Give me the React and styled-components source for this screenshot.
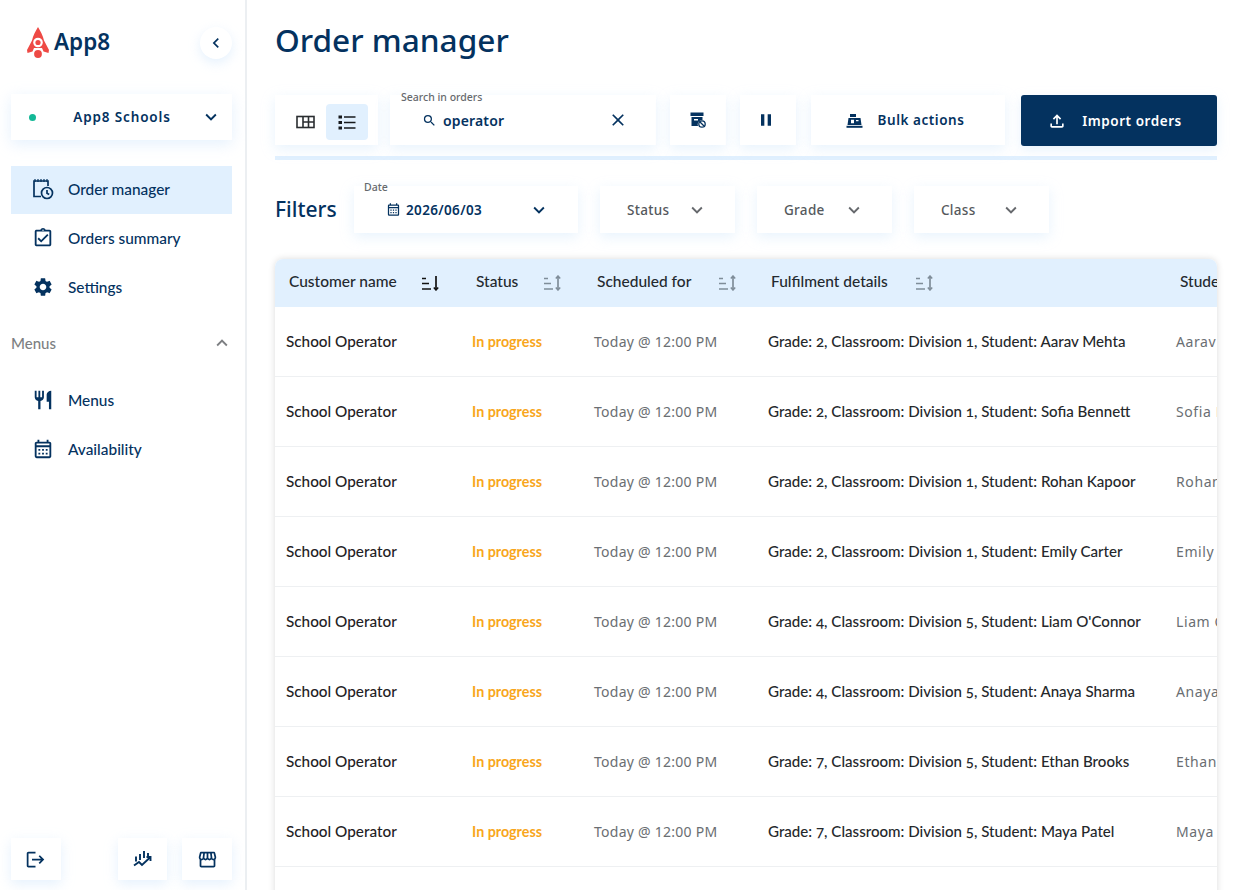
import React from "react";
import styled, { createGlobalStyle } from "styled-components";
import {
  MdChevronLeft,
  MdExpandMore,
  MdExpandLess,
  MdOutlineAssignmentTurnedIn,
  MdSettings,
  MdRestaurant,
  MdOutlineCalendarMonth,
  MdOutlineStorefront,
  MdSearch,
  MdClose,
  MdPause,
  MdOutlineFileUpload,
  MdLogout,
} from "react-icons/md";

const navy = "#04325f";
const pale = "#e1f0fe";
const heading = `"Noto Sans", "Open Sans", sans-serif`;
const body = `"Lato", "Open Sans", sans-serif`;

const Global = createGlobalStyle`
  html, body {
    margin: 0;
    height: 890px;
    overflow: hidden;
    background: #fff;
    font-family: ${body};
  }
  * { box-sizing: border-box; }
`;

const Page = styled.div`
  display: flex;
  width: 1240px;
  height: 890px;
  overflow: hidden;
`;

const Sidebar = styled.aside`
  width: 247px;
  flex: none;
  height: 890px;
  border-right: 2px solid #eceff2;
  padding: 0 13px 10px 11px;
  display: flex;
  flex-direction: column;
  color: ${navy};
`;

const LogoRow = styled.div`
  height: 94px;
  display: flex;
  align-items: center;
  justify-content: space-between;
  padding: 0 0 8px 15px;
`;

const Logo = styled.div`
  display: flex;
  align-items: center;
  gap: 4px;
  font: 600 22.5px ${heading};
`;

const LogoText = styled.span`
  margin-bottom: 4px;
`;

const RoundBtn = styled.button`
  width: 32px;
  height: 32px;
  border: 0;
  border-radius: 50%;
  background: #fff;
  color: ${navy};
  box-shadow: 0 4px 12px rgba(190, 220, 250, 0.4);
  display: grid;
  place-items: center;
  padding: 0;
  font-size: 20px;
`;

const Selector = styled.div`
  height: 46px;
  display: flex;
  align-items: center;
  padding: 0 10px 0 18px;
  box-shadow: 0 4px 14px rgba(190, 220, 250, 0.4);
  font: 600 13.5px ${heading};
  letter-spacing: 0.85px;
  svg { font-size: 22px; }
`;

const Dot = styled.span`
  width: 7px;
  height: 7px;
  border-radius: 50%;
  background: #13b896;
`;

const SelectorText = styled.span`
  flex: 1;
  text-align: center;
  padding-left: 8px;
`;

const NavList = styled.nav`
  display: flex;
  flex-direction: column;
  gap: 1px;
  margin-top: ${(p) => p.$top}px;
`;

const NavItem = styled.a`
  height: 48px;
  display: flex;
  align-items: center;
  gap: 14px;
  padding: 0 0 2px 21px;
  background: ${(p) => (p.$active ? pale : "transparent")};
  font: 500 15.4px ${body};
  color: ${navy};
  svg { font-size: 22px; flex: none; }
`;

const Section = styled.div`
  margin-top: 7px;
  height: 48px;
  display: flex;
  align-items: center;
  justify-content: space-between;
  font: 500 15px ${body};
  color: #7d7f82;
  svg { font-size: 22px; margin-right: -1px; }
`;

const SideFooter = styled.div`
  margin-top: auto;
  display: flex;
  gap: 15px;
`;

const FootBtn = styled.button`
  width: 50px;
  height: 42px;
  border: 0;
  background: #fff;
  color: ${navy};
  box-shadow: 0 4px 12px rgba(190, 220, 250, 0.4);
  display: grid;
  place-items: center;
  padding: 0;
  font-size: 21px;
  margin-right: ${(p) => (p.$push ? 42 : 0)}px;
`;

const Main = styled.main`
  flex: 1;
  min-width: 0;
  padding: 0 23px 0 28px;
`;

const Title = styled.h1`
  margin: 0;
  height: 95px;
  padding-top: 17px;
  font: 500 31.6px/46px ${heading};
  color: ${navy};
`;

const Toolbar = styled.div`
  display: flex;
  gap: 14px;
  height: 51px;
  align-items: flex-start;
`;

const Card = styled.div`
  background: #fff;
  height: 50px;
  box-shadow: 0 4px 12px rgba(190, 220, 250, 0.35);
  display: flex;
  align-items: center;
  flex: none;
  position: relative;
  color: ${navy};
`;

const ViewSwitch = styled(Card)`
  width: 103px;
  padding: 4px 10px 0 9px;
  justify-content: space-between;
`;

const ViewBtn = styled.span`
  width: 42px;
  height: 36px;
  border-radius: 4px;
  display: grid;
  place-items: center;
  background: ${(p) => (p.$on ? pale : "transparent")};
`;

const SearchBox = styled(Card)`
  width: 266px;
  padding: 0 28px 0 32px;
  margin-left: -2px;
  font: 600 14px ${heading};
  letter-spacing: 0.15px;
`;

const FieldLabel = styled.span`
  position: absolute;
  left: ${(p) => p.$left}px;
  top: ${(p) => p.$top}px;
  font: 500 10.5px ${heading};
  letter-spacing: 0;
  color: #666a6e;
  white-space: nowrap;
`;

const SearchText = styled.span`
  flex: 1;
  padding-left: 6px;
`;

const IconBtn = styled(Card)`
  width: 56px;
  justify-content: center;
  font-size: 20px;
  padding-right: ${(p) => p.$shift || 0}px;
`;

const BulkBtn = styled(Card)`
  width: 194px;
  margin-left: 1px;
  justify-content: center;
  gap: 15px;
  padding-right: 6px;
  font: 600 13.5px ${heading};
  letter-spacing: 0.55px;
  svg { flex: none; }
`;

const ImportBtn = styled(BulkBtn)`
  width: 196px;
  height: 51px;
  margin-left: 2px;
  padding-right: 9px;
  border-radius: 3px;
  background: ${navy};
  color: #fff;
`;

const Divider = styled.div`
  height: 4px;
  margin-top: 10px;
  background: ${pale};
`;

const Filters = styled.div`
  margin-top: 26px;
  height: 47px;
  display: flex;
  gap: 22px;
  align-items: center;
`;

const FiltersTitle = styled.h2`
  margin: 0 -5px 2px 0;
  width: 62px;
  font: 500 21px ${heading};
  color: ${navy};
  white-space: nowrap;
`;

const DateFilter = styled(Card)`
  width: 224px;
  height: 47px;
  padding: 0 28px 0 32px;
  font: 600 13.5px ${heading};
  letter-spacing: 0.35px;
  svg:first-of-type { font-size: 15px; margin-right: 5px; }
  svg:last-of-type { font-size: 22px; margin-left: auto; }
`;

const SelectFilter = styled(Card)`
  width: ${(p) => p.$w}px;
  height: 47px;
  justify-content: space-between;
  padding: 0 27px;
  font: 500 13.5px ${heading};
  letter-spacing: 0.3px;
  color: #55595d;
  svg { font-size: 22px; color: #66696d; }
`;

const Table = styled.section`
  margin-top: 26px;
  height: 640px;
  border-radius: 8px 8px 0 0;
  box-shadow: 0 0 7px rgba(0, 0, 0, 0.14);
  overflow: hidden;
`;

const Row = styled.div`
  display: grid;
  grid-template-columns: 186px 122px 174px 408px 140px;
  height: ${(p) => (p.$head ? 48 : 70)}px;
  align-items: center;
  background: ${(p) => (p.$head ? pale : "#fff")};
  border-bottom: ${(p) => (p.$head ? "0" : "1px solid #eef0f2")};
`;

const HeadCell = styled.div`
  display: flex;
  align-items: center;
  justify-content: space-between;
  padding: 0 ${(p) => p.$right}px 0 ${(p) => p.$left}px;
  font: 500 15.5px ${body};
  color: #24292e;
  white-space: nowrap;
`;

const HeadLabel = styled.span`
  margin-bottom: 4px;
`;

const Cell = styled.div`
  padding: 0 0 2px 11px;
  white-space: nowrap;
  overflow: hidden;
  font: 500 15.1px ${body};
  color: #25282b;
  font-variant-numeric: oldstyle-nums;
`;

const StrongCell = styled(Cell)`
  font-size: 15.3px;
  color: #1f2225;
`;

const StatusCell = styled(Cell)`
  padding-bottom: 0;
  font-weight: 700;
  font-size: 14.3px;
  color: #f8a61c;
`;

const MutedCell = styled(Cell)`
  padding-bottom: 0;
  font: 400 14px ${heading};
  letter-spacing: 0.25px;
  color: #6a6e72;
`;

const StudentCell = styled(MutedCell)`
  letter-spacing: 0.6px;
`;

function Rocket() {
  return (
    <svg width="24" height="32" viewBox="0 0 24 32">
      <path d="M12 0 C9.500 4 7 9 6 13.500 L1 23 L1.500 26 L6.500 24.500 L8 21 L16 21 L17.500 24.500 L22.500 26 L23 23 L18 13.500 C17 9 14.500 4 12 0Z" fill="#ee4a45" />
      <circle cx="12" cy="15.500" r="4.800" fill="#fff" />
      <circle cx="12" cy="15.500" r="2.600" fill="#ee4a45" />
      <circle cx="12" cy="27" r="5.200" fill="#fff" />
      <circle cx="12" cy="27" r="3.900" fill="#ee4a45" />
    </svg>
  );
}

function OrderManagerIcon() {
  return (
    <svg width="22" height="22" viewBox="0 0 22 22" fill="none" stroke={navy} strokeWidth="1.700">
      <path d="M9 18.500 H2 V3 H16 V8" />
      <path d="M3 1 v3 M6 1 v3 M9 1 v3 M12 1 v3 M15 1 v3" strokeWidth="1.200" />
      <circle cx="15" cy="15" r="5.500" />
      <path d="M15 12 v3.200 l2.200 1.300" />
    </svg>
  );
}

function GridIcon() {
  return (
    <svg width="19" height="14" viewBox="0 0 19 14" fill="none" stroke="#2a2d30" strokeWidth="1.600">
      <rect x="1" y="1.500" width="17" height="11" />
      <path d="M7 1.500 v11 M12.500 1.500 v11 M7 7 h11" />
    </svg>
  );
}

function ListIcon() {
  return (
    <svg width="18" height="15" viewBox="0 0 18 15">
      <path d="M0.500 0.500 h3.500 v3 h-3.500z M0.500 6 h3.500 v3 h-3.500z M0.500 11.500 h3.500 v3 h-3.500z" fill="#16191c" />
      <path d="M6 2 h11.500 M6 7.500 h11.500 M6 13 h11.500" stroke="#16191c" strokeWidth="1.700" />
    </svg>
  );
}

function ArchiveBlocked() {
  return (
    <svg width="16" height="16" viewBox="0 0 16 16">
      <path d="M0.500 0.500 h13 v3.500 h-13z M1.500 5 h11 v3 a4.500 4.500 0 0 0 -4.500 6 h-6.500z" fill={navy} />
      <path d="M4 7 h4 v1.500 h-4z" fill="#fff" />
      <circle cx="12" cy="12" r="3.200" fill="none" stroke={navy} strokeWidth="1.300" />
      <path d="M10 10 l4 4" stroke={navy} strokeWidth="1.200" />
    </svg>
  );
}

function RegisterIcon() {
  return (
    <svg width="17" height="15" viewBox="0 0 17 15" fill={navy}>
      <path d="M0.500 12.800 h16 v2 h-16z" />
      <path d="M4 1 h6 v3 h-6z" />
      <path fillRule="evenodd" d="M2.500 5 h12 l1 7 h-14z M5 6.800 v3.400 h3 v-3.400z M10 7 v1.300 h2.500 v-1.300z" />
    </svg>
  );
}

function SortIcon({ active }) {
  const c = active ? "#111" : "#7f8d99";
  return (
    <svg width="19" height="16" viewBox="0 0 19 16" fill="none" stroke={c} strokeWidth="1.500">
      <path d="M1 3.500 h4 M1 8.500 h7 M1 14 h9" />
      <path d="M15 1 v14" strokeWidth="1.700" />
      <path d="M12.800 12.500 L15 15 L17.200 12.500" />
      {!active && <path d="M12.800 3.500 L15 1 L17.200 3.500" />}
    </svg>
  );
}

function ChartIcon() {
  return (
    <svg width="20" height="18" viewBox="0 0 20 18" fill="none" stroke={navy} strokeWidth="1.900">
      <path d="M3 6.500 v5 M7 4 v6 M11 1 v7 M15 3 v4" />
      <path d="M1 15.500 L6 12 L9 15 L17 7.500" />
      <path d="M13.500 7 h4 v4" />
    </svg>
  );
}

const people = [
  ["2", "1", "Aarav Mehta"],
  ["2", "1", "Sofia Bennett"],
  ["2", "1", "Rohan Kapoor"],
  ["2", "1", "Emily Carter"],
  ["4", "5", "Liam O'Connor"],
  ["4", "5", "Anaya Sharma"],
  ["7", "5", "Ethan Brooks"],
  ["7", "5", "Maya Patel"],
];

const columns = [
  ["Customer name", 14, 21, true],
  ["Status", 15, 21],
  ["Scheduled for", 14, 20],
  ["Fulfilment details", 14, 231],
];

export default function App() {
  return (
    <Page>
      <Global />
      <Sidebar>
        <LogoRow>
          <Logo>
            <Rocket />
            <LogoText>App8</LogoText>
          </Logo>
          <RoundBtn>
            <MdChevronLeft />
          </RoundBtn>
        </LogoRow>
        <Selector>
          <Dot />
          <SelectorText>App8 Schools</SelectorText>
          <MdExpandMore />
        </Selector>
        <NavList $top={26}>
          <NavItem $active>
            <OrderManagerIcon />
            Order manager
          </NavItem>
          <NavItem>
            <MdOutlineAssignmentTurnedIn />
            Orders summary
          </NavItem>
          <NavItem>
            <MdSettings />
            Settings
          </NavItem>
        </NavList>
        <Section>
          Menus
          <MdExpandLess />
        </Section>
        <NavList $top={10}>
          <NavItem>
            <MdRestaurant />
            Menus
          </NavItem>
          <NavItem>
            <MdOutlineCalendarMonth />
            Availability
          </NavItem>
        </NavList>
        <SideFooter>
          <FootBtn $push>
            <MdLogout />
          </FootBtn>
          <FootBtn>
            <ChartIcon />
          </FootBtn>
          <FootBtn>
            <MdOutlineStorefront />
          </FootBtn>
        </SideFooter>
      </Sidebar>

      <Main>
        <Title>Order manager</Title>
        <Toolbar>
          <ViewSwitch>
            <ViewBtn>
              <GridIcon />
            </ViewBtn>
            <ViewBtn $on>
              <ListIcon />
            </ViewBtn>
          </ViewSwitch>
          <SearchBox>
            <FieldLabel $left={11} $top={-5}>Search in orders</FieldLabel>
            <MdSearch size={15} />
            <SearchText>operator</SearchText>
            <MdClose size={20} />
          </SearchBox>
          <IconBtn>
            <ArchiveBlocked />
          </IconBtn>
          <IconBtn $shift={4}>
            <MdPause />
          </IconBtn>
          <BulkBtn>
            <RegisterIcon />
            Bulk actions
          </BulkBtn>
          <ImportBtn>
            <MdOutlineFileUpload size={20} />
            Import orders
          </ImportBtn>
        </Toolbar>
        <Divider />
        <Filters>
          <FiltersTitle>Filters</FiltersTitle>
          <DateFilter>
            <FieldLabel $left={10} $top={-6}>Date</FieldLabel>
            <MdOutlineCalendarMonth />
            2026/06/03
            <MdExpandMore />
          </DateFilter>
          <SelectFilter $w={135}>
            Status
            <MdExpandMore />
          </SelectFilter>
          <SelectFilter $w={135}>
            Grade
            <MdExpandMore />
          </SelectFilter>
          <SelectFilter $w={135}>
            Class
            <MdExpandMore />
          </SelectFilter>
        </Filters>
        <Table>
          <Row $head>
            {columns.map(([label, left, right, active]) => (
              <HeadCell key={label} $left={left} $right={right}>
                <HeadLabel>{label}</HeadLabel>
                <SortIcon active={active} />
              </HeadCell>
            ))}
            <HeadCell $left={15} $right={0}>
              <HeadLabel>Student</HeadLabel>
            </HeadCell>
          </Row>
          {people.map(([grade, division, name]) => (
            <Row key={name}>
              <StrongCell>School Operator</StrongCell>
              <StatusCell>In progress</StatusCell>
              <MutedCell>Today @ 12:00 PM</MutedCell>
              <Cell>
                Grade: {grade}, Classroom: Division {division}, Student: {name}
              </Cell>
              <StudentCell>{name}</StudentCell>
            </Row>
          ))}
        </Table>
      </Main>
    </Page>
  );
}
